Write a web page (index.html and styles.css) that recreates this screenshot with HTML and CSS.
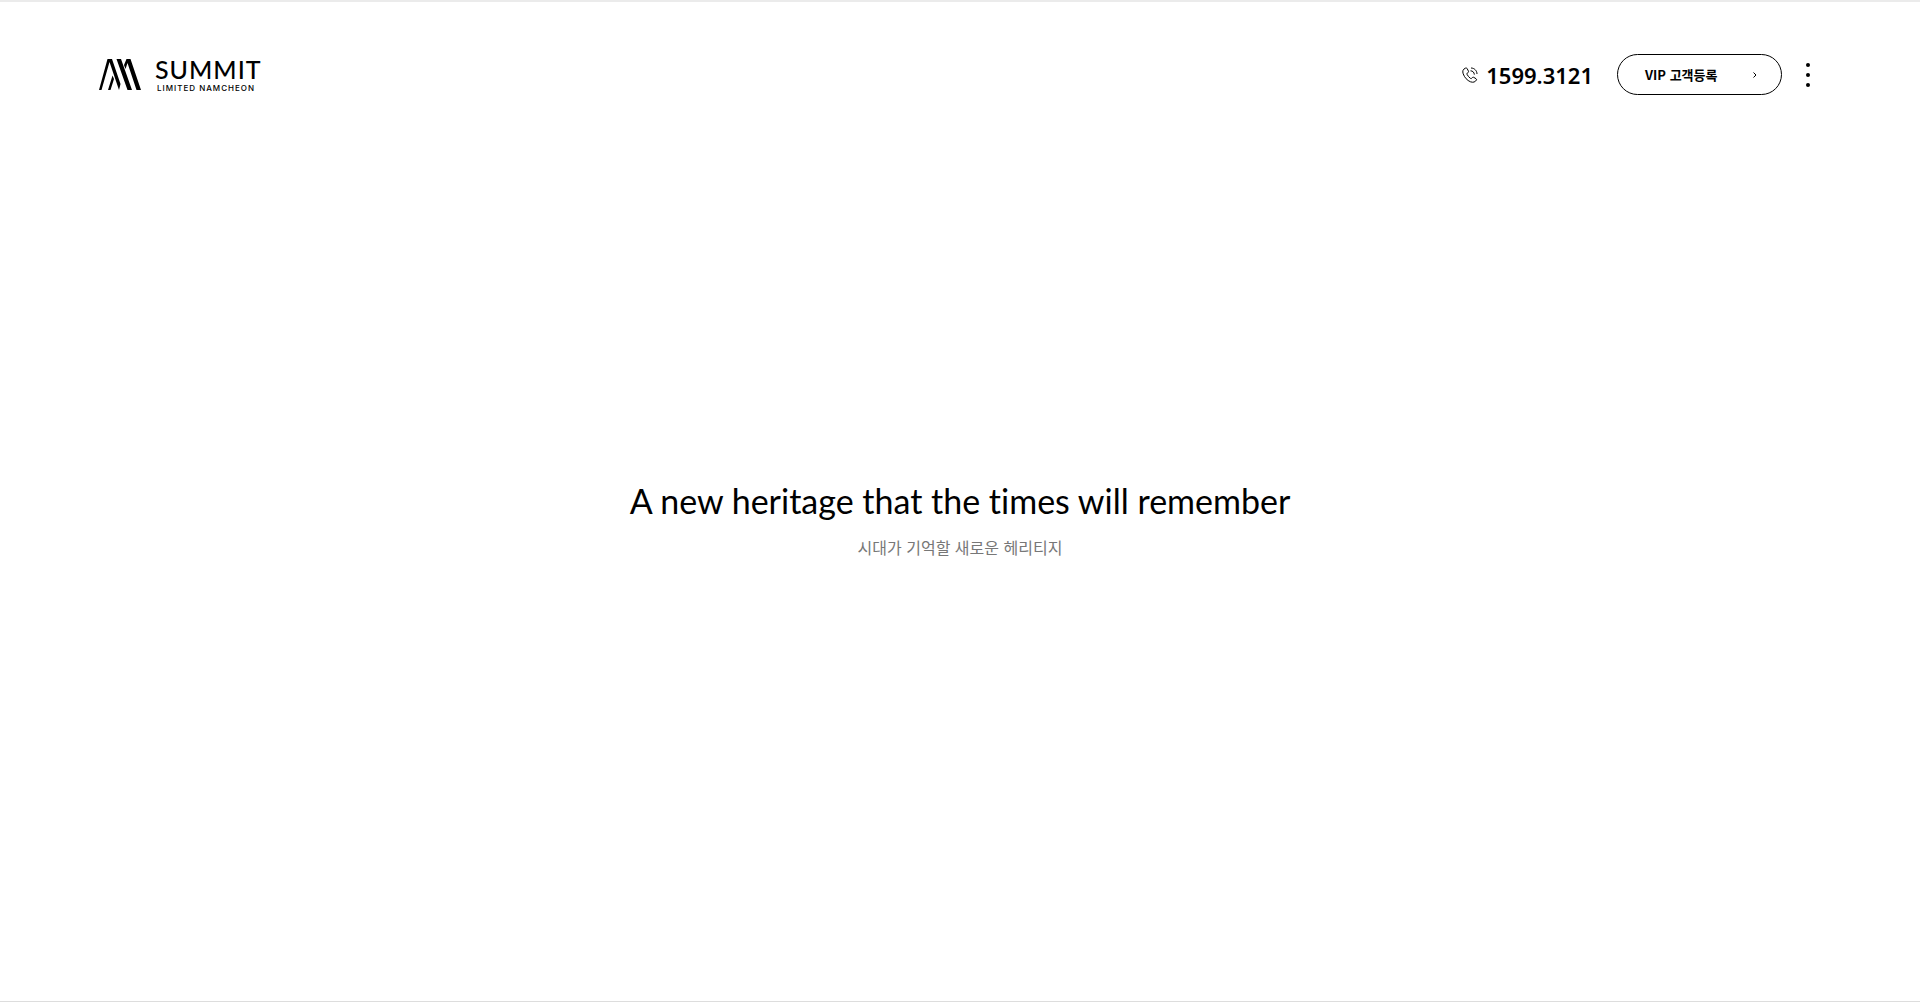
FILE: index.html
```
<!DOCTYPE html>
<html lang="ko">
	<head>
		<meta charset="UTF-8">
		<title>SUMMIT LIMITED NAMCHEON</title>
		<link rel="stylesheet" href="styles.css">
	</head>
	<body>
		<header class="header">
			<a class="logo" href="#">
				<svg class="logo-mark" width="42" height="32" viewBox="0 0 42 32" aria-hidden="true">
					<path d="M0 31L8.500 0H13L21.500 25 20 31 10.500 3 2.500 31zM9 31L13.500 16.500 15 20 11.500 31zM17.500 0H22L33 31H28.500zM25 6L27.500 0H31.500L42 31H37.500L28.500 4 26.500 10z"/>
				</svg>
				<span class="logo-text">
					<strong class="logo-name">SUMMIT</strong>
					<span class="logo-sub">LIMITED NAMCHEON</span>
				</span>
			</a>
			<div class="util">
				<a class="tel" href="tel:15993121">
					<svg class="tel-icon" width="16" height="16" viewBox="0 0 16 16" aria-hidden="true">
						<path d="M3.300 1.200C1 2.200.2 4.200 1.200 6.800c1.300 3.700 4 6.700 7.300 8 2.700 1 4.800.2 5.900-1.800.3-.6.1-1-.4-1.300l-2.300-1.400c-.5-.3-1-.2-1.300.2l-.7.8c-.3.4-.8.4-1.200.1C7 10.300 5.700 8.800 5 7.300c-.2-.5-.1-.9.3-1.200l.9-.6c.4-.3.5-.7.3-1.200L5.200 1.700c-.3-.7-1.100-.9-1.900-.5z"/>
						<path d="M9 1c3.300 0 6 2.700 6 6M8.500 3.800c2.200 0 3.800 1.600 3.800 3.800"/>
					</svg>
					<span>1599.3121</span>
				</a>
				<a class="vip" href="#">
					<span>VIP 고객등록</span>
					<svg class="vip-arrow" width="4" height="6" viewBox="0 0 4 6" aria-hidden="true">
						<path d="M.5.5L3 3 .5 5.500"/>
					</svg>
				</a>
				<button class="menu" type="button" aria-label="메뉴">
					<i></i>
					<i></i>
					<i></i>
				</button>
			</div>
		</header>
		<main class="intro">
			<h1 class="intro-title">A new heritage that the times will remember</h1>
			<p class="intro-text">시대가 기억할 새로운 헤리티지</p>
		</main>
	</body>
</html>
```
FILE: styles.css
```
* {
	margin: 0;
	padding: 0;
	box-sizing: border-box;
}
body {
	display: flex;
	flex-direction: column;
	min-height: 100vh;
	border-top: 2px solid #ebebeb;
	border-bottom: 1px solid #ddd;
	background-color: #fff;
	color: #000;
	font-family: "Noto Sans CJK KR", sans-serif;
}
a {
	color: inherit;
	text-decoration: none;
}
/* header */
.header {
	display: flex;
	justify-content: space-between;
	align-items: center;
	padding: 52px 106px 0 99px;
}
.logo {
	display: flex;
	align-items: center;
	gap: 14px;
}
.logo-text {
	display: flex;
	flex-direction: column;
	gap: 4px;
}
.logo-name {
	font-family: Lato, sans-serif;
	font-size: 25px;
	font-weight: 500;
	line-height: 22px;
	letter-spacing: 1px;
}
.logo-sub {
	padding-left: 2px;
	font-family: Inter, sans-serif;
	font-size: 8px;
	font-weight: 500;
	line-height: 8px;
	letter-spacing: 1px;
}
.util {
	display: flex;
	align-items: center;
}
.tel {
	display: flex;
	align-items: center;
	gap: 8px;
	margin-right: 24px;
	font-family: "Noto Sans", sans-serif;
	font-size: 22px;
	font-weight: 600;
	line-height: 32px;
}
.tel-icon,
.vip-arrow {
	fill: none;
	stroke: #000;
}
.vip {
	display: flex;
	justify-content: space-between;
	align-items: center;
	width: 165px;
	height: 41px;
	padding: 0 24px 0 27px;
	border: 1px solid #000;
	border-radius: 21px;
	font-size: 13px;
	font-weight: 700;
}
.menu {
	display: flex;
	flex-direction: column;
	align-items: center;
	gap: 6px;
	width: 12px;
	margin-left: 20px;
	border: none;
	background: none;
	cursor: pointer;
}
.menu i {
	width: 4px;
	height: 4px;
	border-radius: 50%;
	background-color: #000;
}
/* intro */
.intro {
	flex: 1;
	display: flex;
	flex-direction: column;
	justify-content: center;
	align-items: center;
	padding-bottom: 60px;
}
.intro-title {
	font-family: Lato, sans-serif;
	font-size: 34px;
	font-weight: 400;
	line-height: 48px;
	font-variant-ligatures: none;
}
.intro-text {
	margin-top: 10px;
	color: #777;
	font-size: 16px;
	line-height: 24px;
}
```
